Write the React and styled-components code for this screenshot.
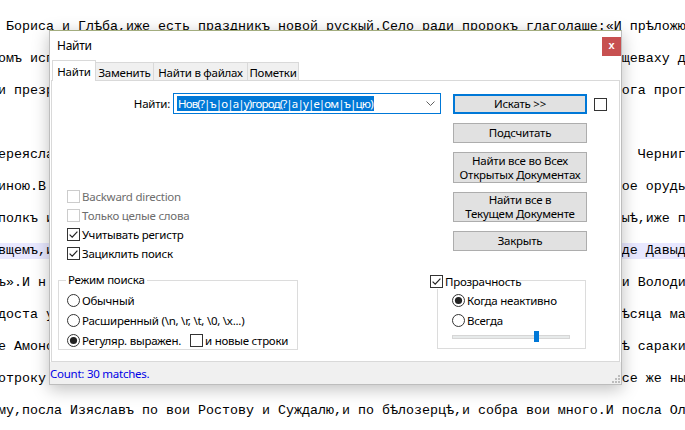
import React from 'react';
import styled, { createGlobalStyle } from 'styled-components';

const Global = createGlobalStyle`
  html, body { margin: 0; padding: 0; background: #fff; }
  body { width: 685px; height: 430px; overflow: hidden; }
`;

const UI = `"Noto Sans", "Open Sans", sans-serif`;

const FILLER =
  'и бысть сѣча зла,и побѣдиша половцѣ,и възвратишася въ свояси съ побѣдою великою,и прославиша Бога и святую Богородицю,и пребыша въ мирѣ и тишинѣ много лѣтъ,и створиша праздникъ великъ въ градѣ томъ,и бысть радость велика по всей земли Русьстѣй ';

const pad = (left, right, off) => {
  const need = 78 - left.length;
  const src = FILLER.repeat(3).slice(off, off + need);
  return left + src + right;
};

const LINES = [
  ' Бориса и Глѣба,иже есть праздникъ новой рускый.Село ради пророкъ глаголаше:«И прѣложю',
  pad('омъ исп', 'щеваху д', 3),
  pad('и презр', 'ога прог', 17),
  '',
  pad('ереясла', '  Черниго', 31),
  pad('иною.В ', 'ое орудь', 44),
  pad('полкъ и', 'ыѣ,иже п', 58),
  pad('вщемъ,и', 'де Давыд', 72),
  pad('ъ».И н ', 'и Володи', 86),
  pad('доста у', 'ѣсяца ма', 99),
  pad('е Амонс', 'ѣ сараки', 113),
  pad('отроку ', 'се же ны', 127),
  'му,посла Изяславъ по вои Ростову и Суждалю,и по бѣлозерцѣ,и собра вои много.И посла Ол',
];

const Editor = styled.div`
  position: relative;
  width: 685px;
  height: 430px;
  overflow: hidden;
  background: #fff;
  padding-top: 19px;
  box-sizing: border-box;
  font-family: "Liberation Mono", "DejaVu Sans Mono", monospace;
  font-size: 13.333px;
  color: #000;
`;

const Line = styled.div`
  height: 16px;
  line-height: 16px;
  margin-bottom: 16px;
  margin-left: -2px;
  white-space: pre;
  background: ${(p) => (p.$current ? '#e8e8ff' : 'transparent')};
`;

const Dialog = styled.div`
  position: absolute;
  left: 49px;
  top: 30px;
  width: 573px;
  height: 355px;
  box-sizing: border-box;
  background: #fff;
  border: 1px solid #bdbdbd;
  border-top-color: #a3ad7f;
  box-shadow: 0 4px 16px rgba(0, 0, 0, 0.26);
  display: flex;
  flex-direction: column;
  font-family: ${UI};
  font-size: 11.5px;
  letter-spacing: -0.25px;
  color: #000;
`;

const TitleBar = styled.div`
  flex: none;
  height: 29px;
  display: flex;
  align-items: center;
  justify-content: space-between;
  padding-left: 7px;
`;

const Title = styled.span`
  font-size: 12px;
`;

const CloseBtn = styled.div`
  width: 19px;
  height: 19px;
  margin-top: 2px;
  background: #c75050;
  color: #fff;
  display: flex;
  align-items: center;
  justify-content: center;
  font-family: "Liberation Sans", sans-serif;
  font-size: 11px;
  font-weight: bold;
  letter-spacing: 0;
  line-height: 1;
  padding-bottom: 2px;
  box-sizing: border-box;
`;

const TabStrip = styled.div`
  flex: none;
  height: 20px;
  display: flex;
  align-items: flex-end;
  padding-left: 2px;
  position: relative;
  z-index: 1;
`;

const Tab = styled.div`
  box-sizing: border-box;
  width: ${(p) => p.$w}px;
  height: ${(p) => (p.$active ? 21 : 18)}px;
  margin-bottom: ${(p) => (p.$active ? -1 : 0)}px;
  margin-right: -1px;
  border: 1px solid #d9d9d9;
  border-bottom: none;
  background: ${(p) => (p.$active ? '#fff' : '#f0f0f0')};
  display: flex;
  align-items: center;
  justify-content: center;
  padding-top: ${(p) => (p.$active ? 0 : 1)}px;
  white-space: nowrap;
`;

const Panel = styled.div`
  flex: 1;
  margin: 0 1px;
  border: 1px solid #d9d9d9;
  background: #fff;
  padding-top: 12px;
  display: flex;
  flex-direction: column;
`;

const TopArea = styled.div`
  display: flex;
  align-items: flex-start;
`;

const LeftCol = styled.div`
  width: 401px;
  flex: none;
`;

const FindRow = styled.div`
  display: flex;
  align-items: center;
  height: 21px;
`;

const Label = styled.span`
  width: 118px;
  text-align: right;
  margin-right: 3px;
`;

const Combo = styled.div`
  width: 268px;
  height: 21px;
  box-sizing: border-box;
  border: 1px solid #0078d7;
  display: flex;
  align-items: center;
  justify-content: space-between;
  padding: 0 5px 0 3px;
`;

const Selected = styled.span`
  background: #0078d7;
  color: #fff;
  line-height: 15px;
  padding: 0 1px;
  white-space: nowrap;
  letter-spacing: -0.85px;
`;

const Options = styled.div`
  margin-top: 73px;
  padding-left: 15px;
`;

const OptionRow = styled.div`
  height: 19px;
  display: flex;
  align-items: center;
  gap: 2px;
  color: ${(p) => (p.$disabled ? '#6d6d6d' : '#000')};
  white-space: nowrap;
`;

const RightCol = styled.div`
  width: 134px;
  flex: none;
  margin-top: 1px;
  display: flex;
  flex-direction: column;
  gap: 9px;
`;

const Button = styled.div`
  box-sizing: border-box;
  height: ${(p) => p.$h || 20}px;
  background: #e1e1e1;
  border: ${(p) => (p.$default ? '2px solid #0078d7' : '1px solid #adadad')};
  display: flex;
  align-items: center;
  justify-content: center;
  text-align: center;
  line-height: 14px;
`;

const SideCheck = styled.div`
  margin-left: 7px;
  padding-top: 5px;
`;

const GroupsRow = styled.div`
  margin-top: 17px;
  padding-left: 6px;
  display: flex;
  align-items: flex-start;
  gap: 139px;
`;

const GroupBox = styled.div`
  position: relative;
  box-sizing: border-box;
  width: ${(p) => p.$w}px;
  height: ${(p) => p.$h}px;
  border: 1px solid #dcdcdc;
  padding: 9px 0 0 ${(p) => p.$pl}px;
`;

const Caption = styled.span`
  position: absolute;
  top: -9px;
  left: 7px;
  background: #fff;
  padding: 0 2px;
  line-height: 16px;
`;

const CheckCaption = styled.div`
  position: absolute;
  top: -8px;
  left: -8px;
  width: 88px;
  height: 16px;
  background: #fff;
  display: flex;
  align-items: center;
  gap: 2px;
`;

const RadioRow = styled.div`
  height: 20px;
  display: flex;
  align-items: center;
  gap: 2px;
  white-space: nowrap;
`;

const InlineCheck = styled.span`
  display: inline-flex;
  align-items: center;
  gap: 2px;
  margin-left: 7px;
`;

const SliderRow = styled.div`
  height: 14px;
  display: flex;
  align-items: center;
`;

const Track = styled.div`
  position: relative;
  width: 118px;
  height: 4px;
  box-sizing: border-box;
  background: #e7eaea;
  border: 1px solid #d6d6d6;
`;

const Thumb = styled.div`
  position: absolute;
  left: 81px;
  top: -5px;
  width: 5px;
  height: 11px;
  background: #0078d7;
`;

const StatusBar = styled.div`
  flex: none;
  height: 22px;
  background: #f0f0f0;
  display: flex;
  align-items: center;
  justify-content: space-between;
  color: #0000e6;
`;

const Grip = styled.svg`
  align-self: flex-end;
  margin: 0 1px 1px 0;
`;

const CheckBox = ({ checked, disabled }) => (
  <svg width="13" height="13" viewBox="0 0 13 13" style={{ flex: 'none' }}>
    <rect x="0.5" y="0.5" width="12" height="12" fill="#fff" stroke={disabled ? '#cccccc' : '#333'} />
    {checked && <path d="M2.6 6.6 L5.2 9.2 L10.4 3.6" fill="none" stroke="#222" strokeWidth="1.2" />}
  </svg>
);

const Radio = ({ checked }) => (
  <svg width="13" height="13" viewBox="0 0 13 13" style={{ flex: 'none' }}>
    <circle cx="6.5" cy="6.5" r="6" fill="#fff" stroke="#333" />
    {checked && <circle cx="6.5" cy="6.5" r="3.6" fill="#222" />}
  </svg>
);

const Chevron = () => (
  <svg width="9" height="5" viewBox="0 0 9 5">
    <path d="M0.5 0.5 L4.5 4.5 L8.5 0.5" fill="none" stroke="#606060" strokeWidth="1" />
  </svg>
);

export default function App() {
  return (
    <>
      <Global />
      <Editor>
        {LINES.map((l, i) => (
          <Line key={i} $current={i === 7}>{l}</Line>
        ))}
        <Dialog>
          <TitleBar>
            <Title>Найти</Title>
            <CloseBtn>x</CloseBtn>
          </TitleBar>
          <TabStrip>
            <Tab $active $w={44}>Найти</Tab>
            <Tab $w={59}>Заменить</Tab>
            <Tab $w={95}>Найти в файлах</Tab>
            <Tab $w={52}>Пометки</Tab>
          </TabStrip>
          <Panel>
            <TopArea>
              <LeftCol>
                <FindRow>
                  <Label>Найти:</Label>
                  <Combo>
                    <Selected>Нов(?|ъ|о|а|у)город(?|а|у|е|ом|ъ|цю)</Selected>
                    <Chevron />
                  </Combo>
                </FindRow>
                <Options>
                  <OptionRow $disabled><CheckBox disabled />Backward direction</OptionRow>
                  <OptionRow $disabled><CheckBox disabled />Только целые слова</OptionRow>
                  <OptionRow><CheckBox checked />Учитывать регистр</OptionRow>
                  <OptionRow><CheckBox checked />Зациклить поиск</OptionRow>
                </Options>
              </LeftCol>
              <RightCol>
                <Button $default>Искать &gt;&gt;</Button>
                <Button>Подсчитать</Button>
                <Button $h={31}>Найти все во Всех<br />Открытых Документах</Button>
                <Button $h={30}>Найти все в<br />Текущем Документе</Button>
                <Button>Закрыть</Button>
              </RightCol>
              <SideCheck><CheckBox /></SideCheck>
            </TopArea>
            <GroupsRow>
              <GroupBox $w={240} $h={70} $pl={8}>
                <Caption>Режим поиска</Caption>
                <RadioRow><Radio />Обычный</RadioRow>
                <RadioRow><Radio />Расширенный (\n, \r, \t, \0, \x...)</RadioRow>
                <RadioRow>
                  <Radio checked />Регуляр. выражен.
                  <InlineCheck><CheckBox />и новые строки</InlineCheck>
                </RadioRow>
              </GroupBox>
              <GroupBox $w={149} $h={69} $pl={14}>
                <CheckCaption><CheckBox checked />Прозрачность</CheckCaption>
                <RadioRow><Radio checked />Когда неактивно</RadioRow>
                <RadioRow><Radio />Всегда</RadioRow>
                <SliderRow>
                  <Track><Thumb /></Track>
                </SliderRow>
              </GroupBox>
            </GroupsRow>
          </Panel>
          <StatusBar>
            <span>Count: 30 matches.</span>
            <Grip width="10" height="10" viewBox="0 0 10 10">
              {[[8, 2], [5, 5], [8, 5], [2, 8], [5, 8], [8, 8]].map(([x, y], i) => (
                <rect key={i} x={x} y={y} width="2" height="2" fill="#bcbcbc" />
              ))}
            </Grip>
          </StatusBar>
        </Dialog>
      </Editor>
    </>
  );
}
